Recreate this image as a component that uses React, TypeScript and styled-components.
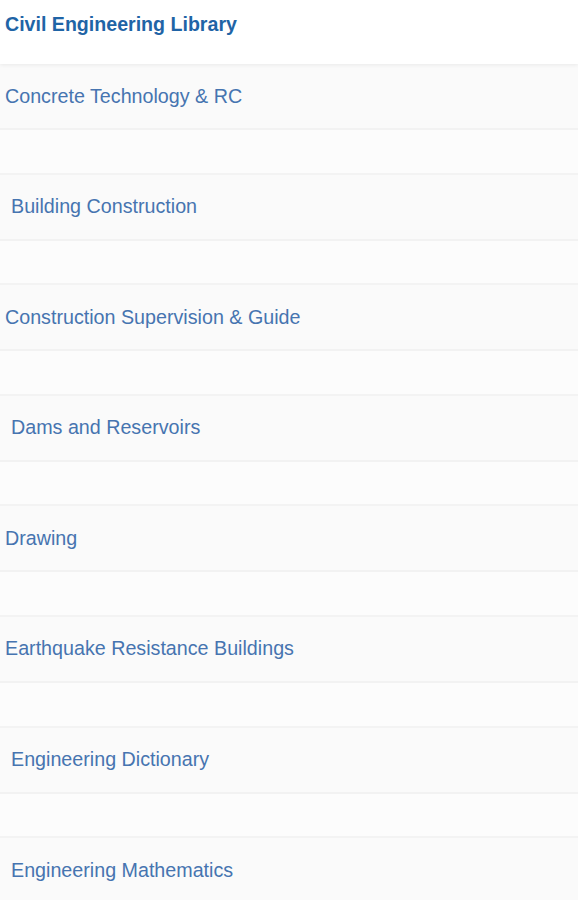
import React from "react";
import { styled, createGlobalStyle } from "styled-components";

const GlobalStyle = createGlobalStyle`
  body {
    margin: 0;
    background: #fcfcfc;
    font-family: "Liberation Sans", Arial, sans-serif;
  }
`;

const StyledLibrary = styled.div`
  width: 578px;
  height: 900px;
  overflow: hidden;
  background: #fcfcfc;
`;

const Header = styled.div`
  position: relative;
  z-index: 1;
  height: 64px;
  box-sizing: border-box;
  padding: 13px 5px 0;
  background: #ffffff;
  box-shadow: 0 1px 4px rgba(0, 0, 0, 0.07);
  color: #1f64a6;
  font-size: 19.6px;
  font-weight: 700;
  line-height: 23px;
`;

const Item = styled.div<{ $indent?: boolean }>`
  display: flex;
  align-items: center;
  height: 64px;
  padding-left: ${(p) => (p.$indent ? "11px" : "5px")};
  background: #fafafa;
  border-bottom: 2px solid #f2f2f2;
  color: #4674b0;
  font-size: 19.7px;
`;

const Spacer = styled.div`
  height: 42.6px;
  background: #fcfcfc;
  border-bottom: 2px solid #f3f3f3;
`;

const books = [
  { title: "Concrete Technology & RC" },
  { title: "Building Construction", indent: true },
  { title: "Construction Supervision & Guide" },
  { title: "Dams and Reservoirs", indent: true },
  { title: "Drawing" },
  { title: "Earthquake Resistance Buildings" },
  { title: "Engineering Dictionary", indent: true },
  { title: "Engineering Mathematics", indent: true },
];

const App = () => {
  return (
    <StyledLibrary>
      <GlobalStyle />
      <Header>Civil Engineering Library</Header>
      {books.map((b) => (
        <React.Fragment key={b.title}>
          <Item $indent={b.indent}>{b.title}</Item>
          <Spacer />
        </React.Fragment>
      ))}
    </StyledLibrary>
  );
};

export default App;
